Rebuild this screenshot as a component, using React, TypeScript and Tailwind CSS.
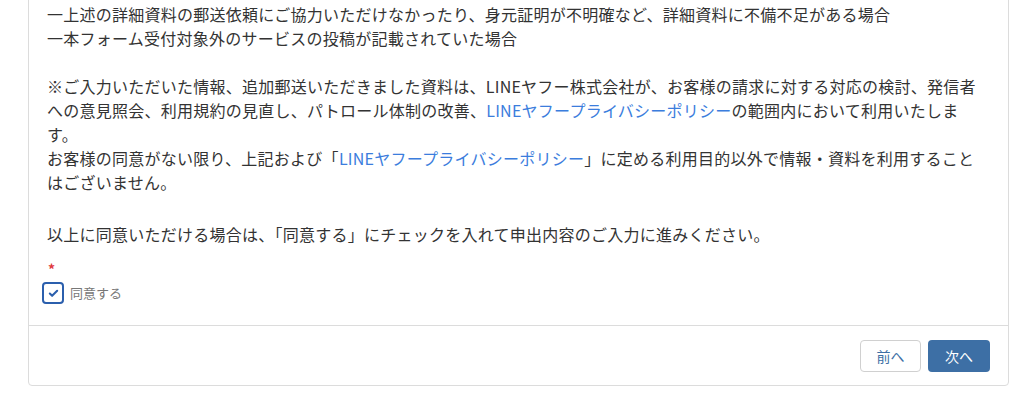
import { Check } from 'lucide-react';

const LINK = 'text-[#3b7ddd]';

export default function App() {
  return (
    <div className="w-[1024px] h-[401px] bg-white overflow-hidden font-['Noto_Sans_CJK_JP','Noto_Sans',sans-serif]">
      <div className="ml-[28px] w-[981px] -mt-[21px] border border-[#dcdcdc] rounded-b-[4px] bg-white">
        <div className="pl-[18px] pr-[4px] pt-[22px] pb-[20px] text-[16px] leading-[24px] tracking-[0.25px] text-[#333333]">
          <p>一上述の詳細資料の郵送依頼にご協力いただけなかったり、身元証明が不明確など、詳細資料に不備不足がある場合</p>
          <p>一本フォーム受付対象外のサービスの投稿が記載されていた場合</p>
          <p>&nbsp;</p>
          <p>
            ※ご入力いただいた情報、追加郵送いただきました資料は、LINEヤフー株式会社が、お客様の請求に対する対応の検討、発信者
            <br />
            への意見照会、利用規約の見直し、パトロール体制の改善、<a className={LINK}>LINEヤフープライバシーポリシー</a>の範囲内において利用いたしま
            <br />
            す。
          </p>
          <p>
            お客様の同意がない限り、上記および「<a className={LINK}>LINEヤフープライバシーポリシー</a>」に定める利用目的以外で情報・資料を利用すること
            <br />
            はございません。
          </p>
          <p>&nbsp;</p>
          <p className="mt-[4px]">以上に同意いただける場合は、「同意する」にチェックを入れて申出内容のご入力に進みください。</p>
          <div className="mt-[17px] text-[#e0393e] text-[14px] leading-[12px] font-bold pl-[1px]">*</div>
          <label className="mt-[6px] -ml-[5px] flex items-center gap-[6px]">
            <span className="w-[22px] h-[22px] rounded-[4px] border-2 border-[#2b5fad] flex items-center justify-center bg-white">
              <Check className="w-[11px] h-[11px] text-[#2b5fad]" strokeWidth={4.5} />
            </span>
            <span className="text-[13px] tracking-normal text-[#777777]">同意する</span>
          </label>
        </div>
        <div className="border-t border-[#dcdcdc] flex justify-end gap-[7px] pr-[18px] pt-[14px] pb-[13px]">
          <button className="w-[61px] h-[32px] rounded-[4px] border border-[#d0d0d0] bg-white text-[14px] text-[#3d6fa5]">前へ</button>
          <button className="w-[62px] h-[32px] rounded-[4px] bg-[#3d6fa5] text-[14px] text-white">次へ</button>
        </div>
      </div>
    </div>
  );
}
